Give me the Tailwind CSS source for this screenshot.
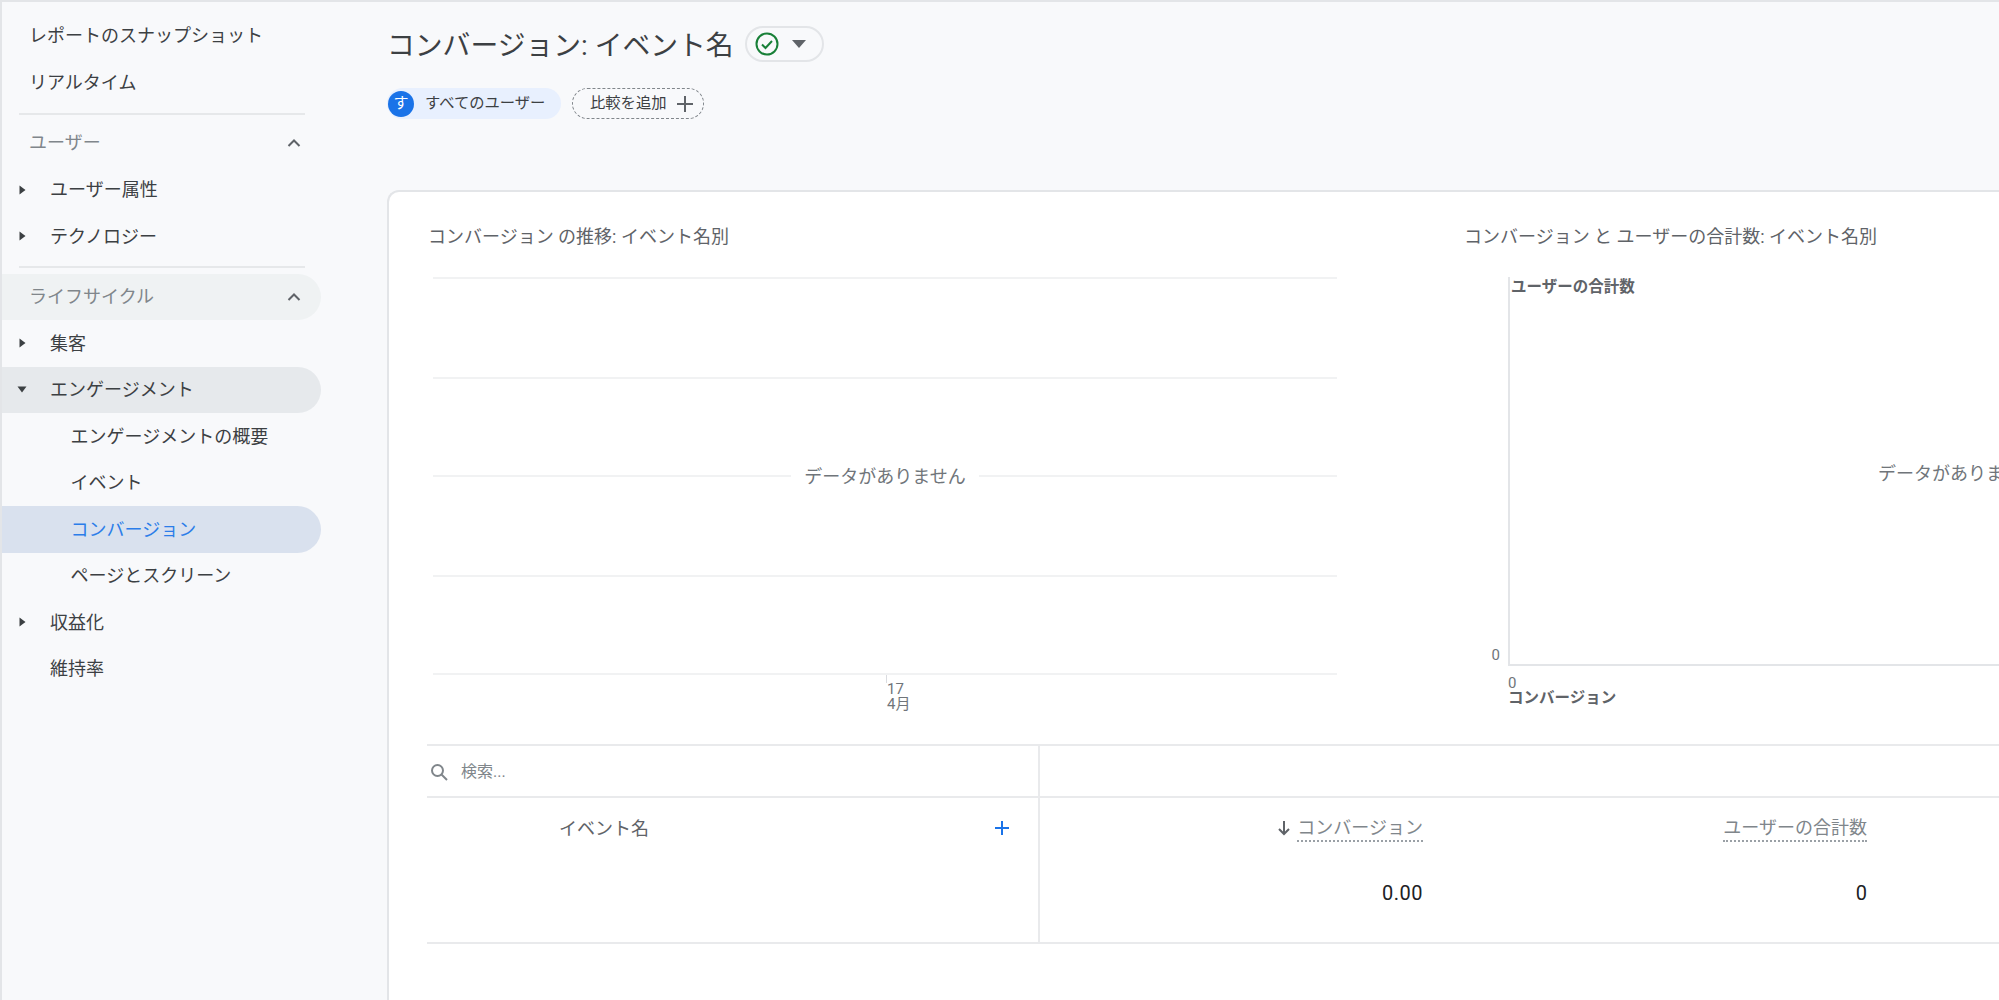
<!DOCTYPE html>
<html lang="ja">
<head>
    <meta charset="UTF-8">
    <meta name="viewport" content="width=device-width, initial-scale=1.0">
    <title>コンバージョン: イベント名</title>
    <script src="https://cdn.jsdelivr.net/npm/@tailwindcss/browser@4"></script>
</head>
<body class="h-[1000px] w-[1999px] overflow-hidden bg-[#f8f9fb] font-['Roboto','Noto_Sans_CJK_JP',sans-serif] text-[#3c4043]">
<div class="flex h-[1000px] w-[1999px] overflow-hidden border-t-2 border-l-2 border-[#e3e5e8]">

    <!-- Sidebar -->
    <aside class="w-[385px] shrink-0 pt-[10.500px] text-[18px]">
        <div class="flex h-[46.5px] items-center pl-[27px]">レポートのスナップショット</div>
        <div class="flex h-[47px] items-center pl-[27px]">リアルタイム</div>
        <div class="mt-[7px] ml-[17px] h-[2px] w-[286px] bg-[#e6e8ea]"></div>
        <div class="mt-[4px] flex h-[47.5px] w-[319px] items-center justify-between pr-[20px] pl-[27px] text-[#80868b]">
            ユーザー
            <svg class="h-[14px] w-[14px]" viewBox="0 0 14 14" fill="none" stroke="#5f6368" stroke-width="2"><path d="M1.500 10 7 4.500l5.500 5.500"/></svg>
        </div>
        <div class="flex h-[46.5px] items-center pl-[17px]">
            <svg class="mr-[24px] h-[10px] w-[7px]" viewBox="0 0 7 10" fill="#3c4043"><path d="M0.500 0.500l6 4.500-6 4.500z"/></svg>
            ユーザー属性
        </div>
        <div class="flex h-[46.5px] items-center pl-[17px]">
            <svg class="mr-[24px] h-[10px] w-[7px]" viewBox="0 0 7 10" fill="#3c4043"><path d="M0.500 0.500l6 4.500-6 4.500z"/></svg>
            テクノロジー
        </div>
        <div class="mt-[6px] ml-[17px] h-[2px] w-[286px] bg-[#e6e8ea]"></div>
        <div class="mt-[6px] flex h-[46.5px] w-[319px] items-center justify-between rounded-r-full bg-[#eff2f3] pr-[20px] pl-[27px] text-[#80868b]">
            ライフサイクル
            <svg class="h-[14px] w-[14px]" viewBox="0 0 14 14" fill="none" stroke="#5f6368" stroke-width="2"><path d="M1.500 10 7 4.500l5.500 5.500"/></svg>
        </div>
        <div class="flex h-[46.5px] items-center pl-[17px]">
            <svg class="mr-[24px] h-[10px] w-[7px]" viewBox="0 0 7 10" fill="#3c4043"><path d="M0.500 0.500l6 4.500-6 4.500z"/></svg>
            集客
        </div>
        <div class="flex h-[46.5px] w-[319px] items-center rounded-r-full bg-[#e6e9ec] pl-[15px]">
            <svg class="mr-[23px] h-[7px] w-[10px]" viewBox="0 0 10 7" fill="#3c4043"><path d="M0.500 0.500h9L5 6.500z"/></svg>
            エンゲージメント
        </div>
        <div class="flex h-[46.5px] items-center pl-[68.500px]">エンゲージメントの概要</div>
        <div class="flex h-[46.5px] items-center pl-[68.500px]">イベント</div>
        <div class="flex h-[46.5px] w-[319px] items-center rounded-r-full bg-[#d9e1ee] pl-[68.500px] text-[#2b7de9]">コンバージョン</div>
        <div class="flex h-[46.5px] items-center pl-[68.500px]">ページとスクリーン</div>
        <div class="flex h-[46.5px] items-center pl-[17px]">
            <svg class="mr-[24px] h-[10px] w-[7px]" viewBox="0 0 7 10" fill="#3c4043"><path d="M0.500 0.500l6 4.500-6 4.500z"/></svg>
            収益化
        </div>
        <div class="flex h-[46.5px] items-center pl-[48px]">維持率</div>
    </aside>

    <!-- Main -->
    <main class="min-w-0 flex-1">
        <div class="mt-[24px] flex h-[36px] items-center">
            <h1 class="pt-[3px] text-[27.800px] leading-[36px] font-normal text-[#3c4043]">コンバージョン: イベント名</h1>
            <div class="ml-[11px] flex h-[36px] w-[79px] items-center rounded-full border-2 border-[#e3e5e8] pl-[8px]">
                <svg class="h-[24px] w-[24px]" viewBox="0 0 24 24" fill="none" stroke="#188038" stroke-width="2"><circle cx="12" cy="12" r="10.500"/><path d="M7 12.500l3.500 3.500 6.500-7"/></svg>
                <svg class="ml-[13px] h-[8px] w-[14px]" viewBox="0 0 14 8" fill="#5f6368"><path d="M0 0h14L7 8z"/></svg>
            </div>
        </div>
        <div class="mt-[26px] flex h-[31px] items-center text-[15.300px]">
            <div class="flex h-[31px] w-[174px] items-center rounded-full bg-[#e8f0fe] pl-[1px]">
                <span class="flex h-[26px] w-[26px] items-center justify-center rounded-full bg-[#1a73e8] text-[15px] text-white">す</span>
                <span class="ml-[11px]">すべてのユーザー</span>
            </div>
            <div class="ml-[11px] flex h-[31px] w-[132px] items-center rounded-full border border-dashed border-[#80868b] pl-[17px]">
                比較を追加
                <svg class="ml-[9px] h-[18px] w-[18px]" viewBox="0 0 18 18" fill="none" stroke="#5f6368" stroke-width="2"><path d="M9 1v16M1 9h16"/></svg>
            </div>
        </div>

        <!-- Card -->
        <section class="mt-[71px] -mr-4 h-[820px] rounded-tl-xl border-t-2 border-l-2 border-[#e3e5e8] bg-white pt-[32px]">
            <div class="flex h-[520px]">
                <!-- Line chart -->
                <div class="w-[1075px] shrink-0 pl-[39px] text-[#5f6368]">
                    <h2 class="h-[26px] text-[18px] leading-[26px] font-normal">コンバージョン の推移: イベント名別</h2>
                    <div class="mt-[27px] ml-[5px] w-[904px]">
                        <div class="h-[100px] border-t-2 border-[#f1f2f3]"></div>
                        <div class="h-[87px] border-t-2 border-[#f1f2f3]"></div>
                        <div class="flex h-[24px] items-center text-[18px] text-[#70757a]">
                            <div class="h-[2px] flex-1 bg-[#f1f2f3]"></div>
                            <span class="px-[13px]">データがありません</span>
                            <div class="h-[2px] flex-1 bg-[#f1f2f3]"></div>
                        </div>
                        <div class="h-[87px]"></div>
                        <div class="h-[98px] border-t-2 border-[#f1f2f3]"></div>
                        <div class="border-t-2 border-[#f1f2f3] pl-[453px]">
                            <div class="h-[8px] border-l border-[#dadce0]"></div>
                            <div class="-mt-[1px] pl-[1px] text-[15px] leading-[15px] text-[#70757a]">17<br>4月</div>
                        </div>
                    </div>
                </div>
                <!-- Scatter chart -->
                <div class="min-w-0 flex-1 text-[#5f6368]">
                    <h2 class="h-[26px] text-[18px] leading-[26px] font-normal whitespace-nowrap">コンバージョン と ユーザーの合計数: イベント名別</h2>
                    <div class="mt-[27px] flex">
                        <div class="flex h-[389px] w-[44px] shrink-0 items-end justify-end pr-[8px] text-[15px] text-[#70757a]">0</div>
                        <div class="flex h-[389px] min-w-0 flex-1 flex-col overflow-hidden border-b-2 border-l-2 border-[#e3e5e8] pl-[1px]">
                            <div class="h-[20px] text-[15.500px] leading-[20px] font-bold whitespace-nowrap">ユーザーの合計数</div>
                            <div class="pt-[165px] pl-[367px] text-[18px] leading-[24px] whitespace-nowrap text-[#70757a]">データがありません</div>
                        </div>
                    </div>
                    <div class="pl-[44px] text-[15px] leading-[15px]">
                        <div class="mt-[10px] text-[#70757a]">0</div>
                        <div class="text-[15.500px] font-bold">コンバージョン</div>
                    </div>
                </div>
            </div>

            <!-- Table -->
            <div class="ml-[38px] flex h-[200px] border-t-2 border-b-2 border-[#e9eaec]">
                <div class="w-[613px] shrink-0 border-r-2 border-[#e9eaec]">
                    <div class="flex h-[52px] items-center border-b-2 border-[#e9eaec] pt-[2px] pl-[2px] text-[16px] text-[#80868b]">
                        <svg class="h-[20px] w-[20px]" viewBox="0 0 20 20" fill="none" stroke="#80868b" stroke-width="2"><circle cx="8.500" cy="8.500" r="5.500"/><path d="M12.500 12.500 18 18"/></svg>
                        <span class="ml-[12px]">検索...</span>
                    </div>
                    <div class="flex h-[60px] items-center pr-[28px] pl-[132px] text-[18px] text-[#5f6368]">
                        <span class="flex-1">イベント名</span>
                        <svg class="h-[16px] w-[16px]" viewBox="0 0 16 16" fill="none" stroke="#1a73e8" stroke-width="2"><path d="M8 1v14M1 8h14"/></svg>
                    </div>
                </div>
                <div class="min-w-0 flex-1">
                    <div class="h-[52px] border-b-2 border-[#e9eaec]"></div>
                    <div class="grid grid-cols-[383px_444px] pt-[10px]">
                        <div class="flex h-[40px] items-center justify-end text-[18px] text-[#80868b]">
                            <svg class="mr-[6px] h-[16px] w-[14px]" viewBox="0 0 14 16" fill="none" stroke="#5f6368" stroke-width="2"><path d="M7 1v13M2 9l5 5 5-5"/></svg>
                            <span class="border-b-2 border-dotted border-[#9aa0a6] leading-[25px]">コンバージョン</span>
                        </div>
                        <div class="flex h-[40px] items-center justify-end text-[18px] text-[#80868b]">
                            <span class="border-b-2 border-dotted border-[#9aa0a6] leading-[25px]">ユーザーの合計数</span>
                        </div>
                        <div class="mt-[33px] text-right text-[20px] leading-[24px] tracking-[0.5px] text-[#202124]">0.00</div>
                        <div class="mt-[33px] text-right text-[20px] leading-[24px] text-[#202124]">0</div>
                    </div>
                </div>
            </div>
        </section>
    </main>
</div>
</body>
</html>
